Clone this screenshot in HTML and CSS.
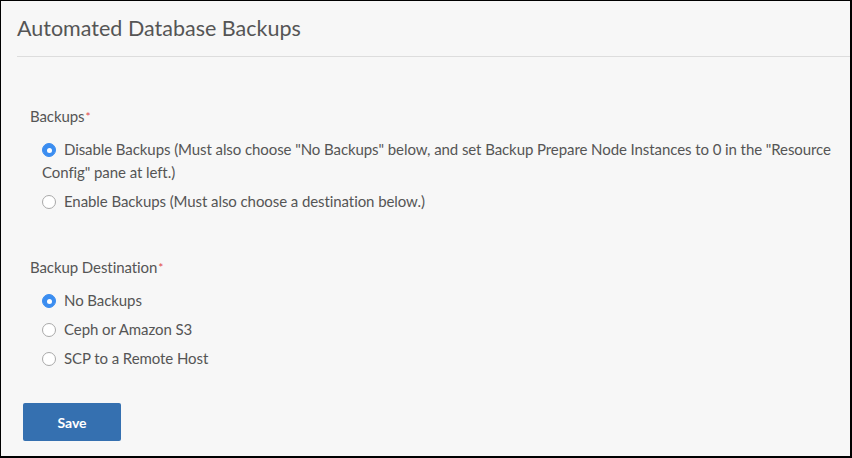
FILE: index.html
```html
<!DOCTYPE html>
<html lang="en">
<head>
<meta charset="utf-8">
<title>Automated Database Backups</title>
<link rel="stylesheet" href="styles.css">
</head>
<body>
<div class="frame">
  <header class="header">
    <h1 class="title">Automated Database Backups</h1>
  </header>
  <form class="form">
    <div class="field" role="radiogroup">
      <div class="field-label">Backups<span class="req">*</span></div>
      <div class="options">
        <label class="option"><span class="radio checked"></span>Disable Backups (Must also choose "No Backups" below, and set Backup Prepare Node Instances to 0 in the "Resource Config" pane at left.)</label>
        <label class="option"><span class="radio"></span>Enable Backups (Must also choose a destination below.)</label>
      </div>
    </div>
    <div class="field field-dest" role="radiogroup">
      <div class="field-label">Backup Destination<span class="req">*</span></div>
      <div class="options">
        <label class="option"><span class="radio checked"></span>No Backups</label>
        <label class="option"><span class="radio"></span>Ceph or Amazon S3</label>
        <label class="option"><span class="radio"></span>SCP to a Remote Host</label>
      </div>
    </div>
    <button type="button" class="btn-save">Save</button>
  </form>
</div>
</body>
</html>
```
FILE: styles.css
```css
* { box-sizing: border-box; }
html, body { margin: 0; padding: 0; }
body {
  background: #ffffff;
  font-family: "Lato", "Liberation Sans", sans-serif;
  color: #555555;
}
.frame {
  width: 852px;
  height: 458px;
  background: #f7f7f7;
  border-style: solid;
  border-color: #000;
  border-width: 1px 2px 2px 1px;
  overflow: hidden;
}
.header {
  margin-left: 16px;
  height: 56px;
  border-bottom: 1px solid #dddddd;
  padding-top: 12px;
}
.title {
  margin: 0;
  font-size: 21.5px;
  font-weight: 400;
  line-height: 30px;
  color: #555555;
}
.form {
  padding: 48px 0 0 22px;
}
.field {
  padding-left: 7px;
  font-size: 15px;
  line-height: 23px;
  letter-spacing: -0.08px;
}
.field-label {
  height: 23px;
}
.req {
  color: #e0474c;
  font-size: 12px;
  line-height: 0;
  vertical-align: 1px;
  margin-left: 1px;
}
.options {
  padding-top: 10px;
  padding-left: 12px;
  display: flex;
  flex-direction: column;
  gap: 6px;
}
.option {
  display: block;
}
.radio {
  display: inline-block;
  width: 14px;
  height: 14px;
  border-radius: 50%;
  border: 1px solid #a9a9a9;
  background: #ffffff;
  vertical-align: top;
  margin-top: 5px;
  margin-right: 8px;
  position: relative;
}
.radio.checked {
  border-color: #3b8df0;
  background: #3b8df0;
}
.radio.checked::after {
  content: "";
  position: absolute;
  left: 3.5px;
  top: 3.5px;
  width: 5px;
  height: 5px;
  border-radius: 50%;
  background: #ffffff;
}
.field-dest {
  margin-top: 43px;
}
.btn-save {
  display: block;
  margin-top: 33px;
  width: 98px;
  height: 38px;
  background: #3570b0;
  border: 0;
  border-radius: 2px;
  color: #ffffff;
  font-family: "Lato", "Liberation Sans", sans-serif;
  font-weight: 700;
  font-size: 14px;
  padding: 0;
}
```
